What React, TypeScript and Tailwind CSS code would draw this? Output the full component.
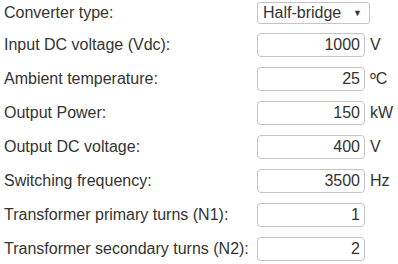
import React from "react";

const rows: { label: string; value: string; unit: string }[] = [
  { label: "Input DC voltage (Vdc):", value: "1000", unit: "V" },
  { label: "Ambient temperature:", value: "25", unit: "ºC" },
  { label: "Output Power:", value: "150", unit: "kW" },
  { label: "Output DC voltage:", value: "400", unit: "V" },
  { label: "Switching frequency:", value: "3500", unit: "Hz" },
  { label: "Transformer primary turns (N1):", value: "1", unit: "" },
  { label: "Transformer secondary turns (N2):", value: "2", unit: "" },
];

export default function App() {
  return (
    <div
      className="w-[398px] h-[264px] bg-white text-[#333] text-[16px] leading-none pt-[2px] pl-[4px] flex flex-col gap-[10px]"
      style={{ fontFamily: '"Liberation Sans", Arial, sans-serif' }}
    >
      <div className="flex items-center h-[22px] -mb-[1px]">
        <div className="w-[253px]">Converter type:</div>
        <div className="w-[113px] h-[22px] border border-[#c4c4c4] rounded-[3px] flex items-center justify-between pl-[5px] pr-[7px] text-[#333]">
          <span>Half-bridge</span>
          <span className="text-[9px]">▼</span>
        </div>
      </div>
      {rows.map((r) => (
        <div key={r.label} className="flex items-center h-[24px]">
          <div className="w-[253px]">{r.label}</div>
          <div className="w-[108px] h-[24px] border border-[#c4c4c4] rounded-[4px] flex items-center justify-end pr-[4px] text-[#333]">
            {r.value}
          </div>
          {r.unit && <div className="ml-[5px] text-[#333]">{r.unit}</div>}
        </div>
      ))}
    </div>
  );
}
